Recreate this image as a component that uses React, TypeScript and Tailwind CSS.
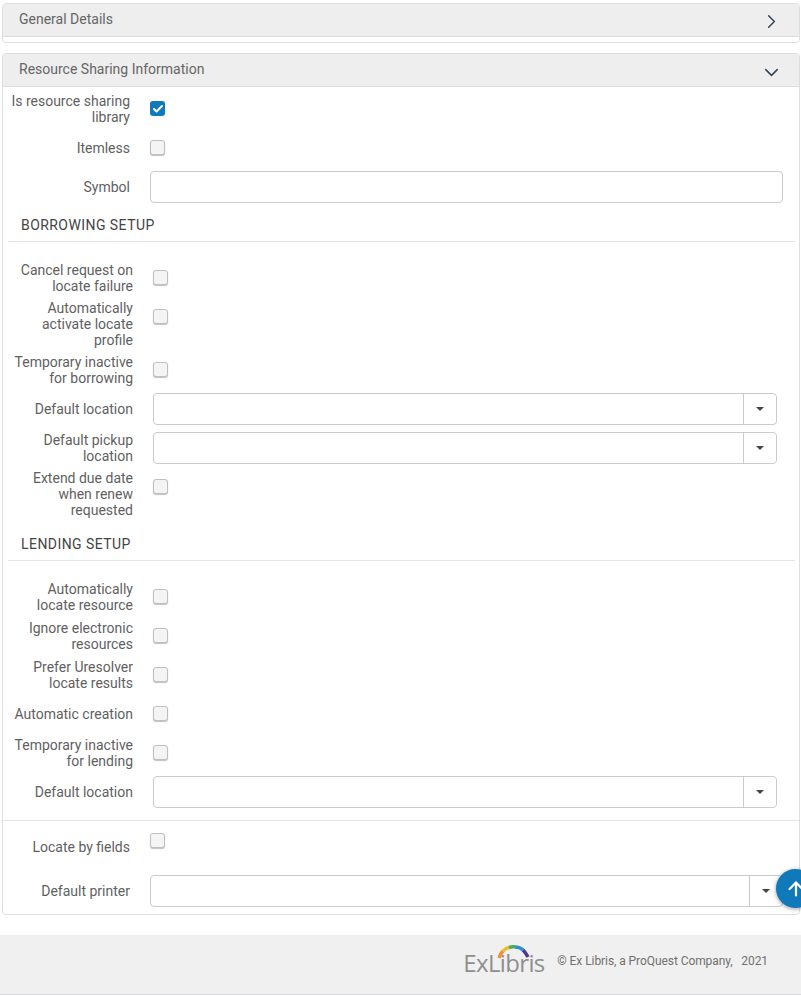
import React from "react";
import { ArrowUp, ChevronDown, ChevronRight, Check } from "lucide-react";

const CheckBox = ({ checked = false, offset = "-mt-[1px]" }: { checked?: boolean; offset?: string }) => (
  <span
    className={
      checked
        ? `flex h-[15px] w-[15px] items-center justify-center rounded-[3px] bg-[#0f79b9] ${offset}`
        : `block h-[15px] w-[15px] rounded-[3px] border border-[#bfbfbf] bg-[#f4f4f4] shadow-[0_1px_1px_rgba(0,0,0,0.25)] ${offset}`
    }
  >
    {checked && <Check size={12} strokeWidth={4} className="text-white" />}
  </span>
);

const Label = ({ children }: { children: React.ReactNode }) => (
  <div className="w-[122px] text-right text-sm leading-4 text-[#5f5f5f]">{children}</div>
);

interface RowProps {
  label: string;
  top: string;
  children: React.ReactNode;
  indent?: string;
}

const Row = ({ label, top, children, indent = "pl-2" }: RowProps) => (
  <div className={`flex items-center gap-5 ${indent} ${top}`}>
    <Label>{label}</Label>
    {children}
  </div>
);

const TextInput = ({ margin }: { margin: string }) => (
  <div className={`h-8 flex-1 rounded border border-[#cbcbcb] bg-white ${margin}`} />
);

const SelectInput = ({ margin }: { margin: string }) => (
  <div className={`flex h-8 flex-1 justify-end rounded border border-[#cbcbcb] bg-white ${margin}`}>
    <div className="flex w-[33px] items-center justify-center border-l border-[#cbcbcb]">
      <span className="h-0 w-0 border-x-4 border-t-4 border-x-transparent border-t-[#444]" />
    </div>
  </div>
);

const SectionTitle = ({ title, top }: { title: string; top: string }) => (
  <div className={`ml-[5px] mr-[4px] border-b border-[#e4e4e4] pb-2 pl-[13px] text-sm leading-4 tracking-[0.44px] text-[#444] ${top}`}>
    {title}
  </div>
);

const PanelHeader = ({ title, open }: { title: string; open: boolean }) => (
  <div className="flex h-[33px] items-center justify-between rounded-t border-b border-[#dcdcdc] bg-[#eeeeee] pl-4 pr-4 text-sm text-[#666]">
    <span className="-mt-[3px]">{title}</span>
    {open ? (
      <ChevronDown size={23} strokeWidth={1.5} className="mt-[4px] text-[#2f4356]" />
    ) : (
      <ChevronRight size={23} strokeWidth={1.5} className="mt-[2px] text-[#2f4356]" />
    )}
  </div>
);

const Logo = () => (
  <div className="relative h-[34px] w-[84px]">
    <svg className="absolute left-[34px] top-0 h-4 w-[36px]" viewBox="0 0 36 16" fill="none" strokeWidth="3.5">
      <path d="M2 13 Q3 9 6 6" stroke="#f0902a" />
      <path d="M6 6 Q9 3 12 2.5" stroke="#e8c02c" />
      <path d="M12 2.5 Q15 1.5 18 2" stroke="#4eab54" />
      <path d="M18 2 Q23 2 26 5" stroke="#2f8fcf" />
      <path d="M26 5 Q29 8 31 12" stroke="#4a3a8c" />
    </svg>
    <span className="absolute bottom-[1px] left-0 whitespace-nowrap font-['Open_Sans',sans-serif] text-[24px] font-medium leading-[30px] tracking-[-0.65px] text-[#8e8e8e]">
      ExLibris
    </span>
  </div>
);

export default function App() {
  return (
    <div className="relative h-[996px] w-[801px] overflow-hidden bg-white pt-[3px] font-['Roboto',sans-serif]">
      <div className="ml-[2px] mr-[1px] h-10 rounded border border-[#dedede] bg-white">
        <PanelHeader title="General Details" open={false} />
      </div>

      <div className="ml-[2px] mr-[1px] mt-[10px] rounded border border-[#dedede] bg-white pb-[7px]">
        <PanelHeader title="Resource Sharing Information" open />

        <Row label="Is resource sharing library" top="mt-[6px]" indent="pl-[5px]">
          <CheckBox checked />
        </Row>
        <Row label="Itemless" top="mt-[15px]" indent="pl-[5px]">
          <CheckBox />
        </Row>
        <Row label="Symbol" top="mt-[15px]" indent="pl-[5px]">
          <TextInput margin="mr-4" />
        </Row>

        <SectionTitle title="BORROWING SETUP" top="mt-[14px]" />
        <Row label="Cancel request on locate failure" top="mt-5">
          <CheckBox />
        </Row>
        <Row label="Automatically activate locate profile" top="mt-[6px]">
          <CheckBox offset="self-start mt-[9px]" />
        </Row>
        <Row label="Temporary inactive for borrowing" top="mt-[6px]">
          <CheckBox />
        </Row>
        <Row label="Default location" top="mt-[7px]">
          <SelectInput margin="mr-[22px]" />
        </Row>
        <Row label="Default pickup location" top="mt-[7px]">
          <SelectInput margin="mr-[22px]" />
        </Row>
        <Row label="Extend due date when renew requested" top="mt-[6px]">
          <CheckBox offset="self-start mt-[9px]" />
        </Row>

        <SectionTitle title="LENDING SETUP" top="mt-[18px]" />
        <Row label="Automatically locate resource" top="mt-5">
          <CheckBox />
        </Row>
        <Row label="Ignore electronic resources" top="mt-[7px]">
          <CheckBox />
        </Row>
        <Row label="Prefer Uresolver locate results" top="mt-[7px]">
          <CheckBox />
        </Row>
        <Row label="Automatic creation" top="mt-[15px]">
          <CheckBox />
        </Row>
        <Row label="Temporary inactive for lending" top="mt-[15px]">
          <CheckBox />
        </Row>
        <Row label="Default location" top="mt-[7px]">
          <SelectInput margin="mr-[22px]" />
        </Row>

        <div className="mt-3 border-b border-[#e4e4e4]" />
        <div className="mt-3 flex items-start gap-5 pl-[5px]">
          <div className="mt-[6px]">
            <Label>Locate by fields</Label>
          </div>
          <CheckBox offset="" />
        </div>
        <Row label="Default printer" top="mt-5" indent="pl-[5px]">
          <SelectInput margin="mr-4" />
        </Row>
      </div>

      <div className="mt-[20px] flex h-[60px] items-start justify-end border-b border-[#d9d9de] bg-[#f0f0f0] pr-[33px]">
        <div className="mt-[10px] mr-[10px]">
          <Logo />
        </div>
        <span className="mt-[18px] whitespace-pre text-xs leading-4 tracking-[-0.07px] text-[#707070]">© Ex Libris, a ProQuest Company,   2021</span>
      </div>

      <button className="absolute left-[776px] top-[869px] flex h-[39px] w-[39px] items-center justify-center rounded-full bg-[#0f79b9] shadow-[0_1px_4px_rgba(0,0,0,0.4)]">
        <ArrowUp size={22} strokeWidth={2.4} className="text-white" />
      </button>
    </div>
  );
}
